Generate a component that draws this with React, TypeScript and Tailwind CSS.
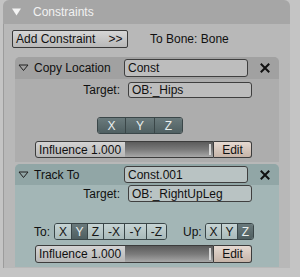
import React from "react";

function Field({ text, w, bg }: { text: string; w: string; bg: string }) {
  return (
    <div className={`${w} h-full rounded-[3px] border border-[#3f3f3f] ${bg} flex items-center pl-[3px] text-[#101010] leading-none whitespace-nowrap`}>
      {text}
    </div>
  );
}

function CloseX() {
  return (
    <svg width="10" height="10" viewBox="0 0 10 10" className="block">
      <path d="M1.5 1.5 L8.5 8.5 M8.5 1.5 L1.5 8.5" stroke="#111" strokeWidth="2" strokeLinecap="square" />
    </svg>
  );
}

function Arrow() {
  return (
    <svg width="11" height="8" viewBox="0 0 11 8" className="block">
      <polygon points="1,1 10,1 5.5,6.5" fill="none" stroke="#202020" strokeWidth="1" />
    </svg>
  );
}

function Influence() {
  return (
    <div className="flex h-full">
      <div className="w-[179px] h-full rounded-l-[3px] border border-[#3c3c3c] bg-linear-to-b from-[#d4d4d4] to-[#b6b6b6] flex items-stretch">
        <div className="w-[89px] flex items-center pl-[3px] text-[#101010] leading-none whitespace-nowrap">Influence 1.000</div>
        <div className="flex-1 bg-linear-to-b from-[#5c5c5c] via-[#7a7a7a] to-[#a8a8a8] flex justify-end items-stretch">
          <div className="w-[2px] bg-[#d8d8d8] mr-[2px] my-[2px]" />
        </div>
      </div>
      <div className="w-[38px] h-full rounded-r-[3px] border border-l-0 border-[#3c3c3c] bg-linear-to-b from-[#e6dad2] to-[#c6b4a8] flex items-center justify-center text-[#101010] leading-none">
        Edit
      </div>
    </div>
  );
}

export default function App() {
  const dark = "bg-linear-to-b from-[#6a7a7c] to-[#4f5f61] text-[#e8eeee]";
  const light = "bg-linear-to-b from-[#c6d4d4] to-[#a9baba] text-[#151515]";
  const seg = "flex items-center justify-center leading-none";

  return (
    <div
      className="w-[300px] h-[277px] bg-[#c4c4c4] overflow-hidden text-[12px] whitespace-nowrap"
      style={{ fontFamily: '"Liberation Sans", Arial, sans-serif' }}
    >
      <div className="ml-[3px] w-[287px] h-[268px] flex flex-col">
        {/* panel header */}
        <div className="h-[24px] bg-[#a6a6a6] rounded-t-[6px] flex items-center pl-[9px] gap-[12px] text-[#f2f2f2]">
          <svg width="9" height="8" viewBox="0 0 9 8" className="block">
            <polygon points="0,0.5 9,0.5 4.5,7.5" fill="#f4f4f4" />
          </svg>
          <span className="leading-none">Constraints</span>
        </div>

        {/* panel body */}
        <div className="flex-1 bg-[#b8b8b8] border-l border-[#9c9c9c] flex flex-col pl-[8px]">
          <div className="mt-[6px] h-[18px] flex items-center">
            <div className="w-[116px] h-full rounded-[2px] border border-[#3a3a3a] bg-linear-to-b from-[#d6d6d6] to-[#b8b8b8] flex items-center pl-[3px] text-[#101010] leading-none">
              <span>Add Constraint</span>
              <span className="ml-[13px]">&gt;&gt;</span>
            </div>
            <span className="ml-[22px] text-[#101010] leading-none">To Bone: Bone</span>
          </div>

          {/* Copy Location */}
          <div className="mt-[9px] ml-[3px] w-[264px] bg-[#adadad] rounded-t-[5px] flex flex-col pb-[4px]">
            <div className="h-[22px] bg-[#a1a1a1] rounded-t-[5px] flex items-center">
              <div className="ml-[3px]"><Arrow /></div>
              <span className="ml-[5px] text-[#101010] leading-none">Copy Location</span>
              <div className="ml-auto h-[18px] flex items-center">
                <Field text="Const" w="w-[124px]" bg="bg-[#bdbdbd]" />
              </div>
              <div className="ml-[12px] mr-[9px]"><CloseX /></div>
            </div>
            <div className="mt-[3px] h-[16px] flex items-center">
              <span className="w-[105px] text-right text-[#101010] leading-none">Target:</span>
              <div className="ml-[8px] h-full flex">
                <Field text="OB:_Hips" w="w-[124px]" bg="bg-[#bdbdbd]" />
              </div>
            </div>
            <div className="mt-[19px] ml-[82px] h-[17px] w-[86px] flex rounded-[3px] overflow-hidden border border-[#3a4648]">
              <div className={`w-[28px] border-r border-[#3a4648] ${seg} ${dark}`}>X</div>
              <div className={`w-[29px] border-r border-[#3a4648] ${seg} ${dark}`}>Y</div>
              <div className={`flex-1 ${seg} ${dark}`}>Z</div>
            </div>
            <div className="mt-[7px] ml-[20px] h-[17px]">
              <Influence />
            </div>
          </div>

          {/* Track To */}
          <div className="mt-[2px] ml-[3px] w-[264px] bg-[#a3b6b6] rounded-t-[5px] flex flex-col pb-[4px]">
            <div className="h-[21px] bg-[#91a6a6] rounded-t-[5px] flex items-center">
              <div className="ml-[3px]"><Arrow /></div>
              <span className="ml-[5px] text-[#101010] leading-none">Track To</span>
              <div className="ml-auto h-[17px] flex items-center">
                <Field text="Const.001" w="w-[124px]" bg="bg-[#b9c3c3]" />
              </div>
              <div className="ml-[12px] mr-[9px]"><CloseX /></div>
            </div>
            <div className="h-[17px] flex items-center">
              <span className="w-[105px] text-right text-[#101010] leading-none">Target:</span>
              <div className="ml-[8px] h-full flex">
                <Field text="OB:_RightUpLeg" w="w-[124px]" bg="bg-[#b9c3c3]" />
              </div>
            </div>
            <div className="mt-[21px] h-[17px] flex items-center">
              <span className="ml-[19px] w-[20px] text-[#101010] leading-none">To:</span>
              <div className="h-full flex rounded-[3px] overflow-hidden border border-[#3a4648]">
                <div className={`w-[17px] border-r border-[#3a4648] ${seg} ${light}`}>X</div>
                <div className={`w-[16px] border-r border-[#3a4648] ${seg} ${dark}`}>Y</div>
                <div className={`w-[16px] border-r border-[#3a4648] ${seg} ${light}`}>Z</div>
                <div className={`w-[21px] border-r border-[#3a4648] ${seg} ${light}`}>-X</div>
                <div className={`w-[22px] border-r border-[#3a4648] ${seg} ${light}`}>-Y</div>
                <div className={`w-[19px] ${seg} ${light}`}>-Z</div>
              </div>
              <span className="ml-[16px] w-[22px] text-[#101010] leading-none">Up:</span>
              <div className="h-full flex rounded-[3px] overflow-hidden border border-[#3a4648]">
                <div className={`w-[16px] border-r border-[#3a4648] ${seg} ${light}`}>X</div>
                <div className={`w-[16px] border-r border-[#3a4648] ${seg} ${light}`}>Y</div>
                <div className={`w-[15px] ${seg} ${dark}`}>Z</div>
              </div>
            </div>
            <div className="mt-[5px] ml-[20px] h-[18px]">
              <Influence />
            </div>
          </div>
        </div>
      </div>
    </div>
  );
}
